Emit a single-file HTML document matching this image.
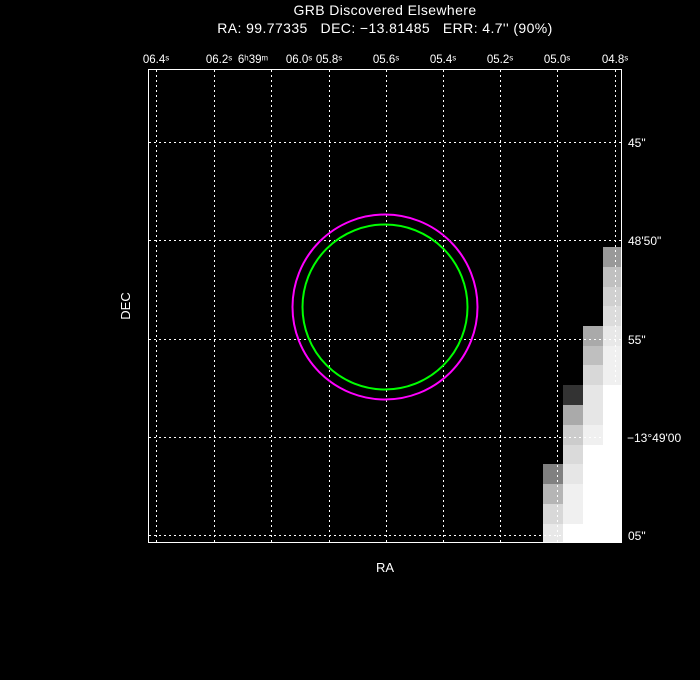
<!DOCTYPE html>
<html><head><style>html,body{margin:0;padding:0;background:#000;width:700px;height:680px;overflow:hidden}text{white-space:pre}</style></head>
<body>
<svg width="700" height="680" xmlns="http://www.w3.org/2000/svg" font-family="Liberation Sans, DejaVu Sans, sans-serif" fill="#fff">
<rect width="700" height="680" fill="#000"/>
<text x="385" y="15" font-size="14" text-anchor="middle" letter-spacing="0.4">GRB Discovered Elsewhere</text>
<text x="385" y="33" font-size="14" text-anchor="middle" letter-spacing="0.4">RA: 99.77335   DEC: −13.81485   ERR: 4.7'' (90%)</text>
<g font-size="11.5" text-anchor="middle">
<text x="156" y="63">06.4ˢ</text>
<text x="219" y="63">06.2ˢ</text>
<text x="253" y="63">6ʰ39ᵐ</text>
<text x="299" y="63">06.0ˢ</text>
<text x="329" y="63">05.8ˢ</text>
<text x="386" y="63">05.6ˢ</text>
<text x="443" y="63">05.4ˢ</text>
<text x="500" y="63">05.2ˢ</text>
<text x="557" y="63">05.0ˢ</text>
<text x="615" y="63">04.8ˢ</text>
</g>
<g>
<rect x="603" y="247" width="19" height="20" fill="#999"/>
<rect x="603" y="267" width="19" height="20" fill="#c0c0c0"/>
<rect x="603" y="287" width="19" height="19" fill="#d0d0d0"/>
<rect x="603" y="306" width="19" height="20" fill="#dcdcdc"/>
<rect x="603" y="326" width="19" height="20" fill="#e8e8e8"/>
<rect x="603" y="346" width="19" height="39" fill="#f0f0f0"/>
<rect x="603" y="385" width="19" height="158" fill="#fff"/>
<rect x="583" y="326" width="20" height="20" fill="#aaa"/>
<rect x="583" y="346" width="20" height="19" fill="#bfbfbf"/>
<rect x="583" y="365" width="20" height="20" fill="#d8d8d8"/>
<rect x="583" y="385" width="20" height="40" fill="#e6e6e6"/>
<rect x="583" y="425" width="20" height="20" fill="#f0f0f0"/>
<rect x="583" y="445" width="20" height="98" fill="#fff"/>
<rect x="563" y="385" width="20" height="20" fill="#333"/>
<rect x="563" y="405" width="20" height="20" fill="#aaa"/>
<rect x="563" y="425" width="20" height="20" fill="#ccc"/>
<rect x="563" y="445" width="20" height="19" fill="#dadada"/>
<rect x="563" y="464" width="20" height="20" fill="#e6e6e6"/>
<rect x="563" y="484" width="20" height="40" fill="#f0f0f0"/>
<rect x="563" y="524" width="20" height="19" fill="#fff"/>
<rect x="543" y="464" width="20" height="20" fill="#808080"/>
<rect x="543" y="484" width="20" height="20" fill="#b5b5b5"/>
<rect x="543" y="504" width="20" height="20" fill="#d8d8d8"/>
<rect x="543" y="524" width="20" height="19" fill="#e8e8e8"/>
</g>
<g stroke="#fff" stroke-width="1" stroke-dasharray="2,3" fill="none">
<path d="M156.5 70V543M214.5 70V543M271.5 70V543M329.5 70V543M386.5 70V543M443.5 70V543M500.5 70V543M557.5 70V543M615.5 70V543"/>
<path d="M149 142.5H622M149 240.5H622M149 339.5H622M149 437.5H622M149 535.5H622"/>
</g>
<rect x="148.5" y="69.5" width="473" height="473" fill="none" stroke="#fff" stroke-width="1"/>
<circle cx="385" cy="307" r="92.5" fill="none" stroke="#f0f" stroke-width="2"/>
<circle cx="385" cy="307" r="82.5" fill="none" stroke="#0f0" stroke-width="2"/>
<g font-size="12">
<text x="628" y="147">45"</text>
<text x="628" y="245">48'50"</text>
<text x="628" y="344">55"</text>
<text x="627" y="442">−13°49'00</text>
<text x="628" y="540">05"</text>
</g>
<text x="385" y="572" font-size="13" text-anchor="middle">RA</text>
<text transform="translate(130,306) rotate(-90)" font-size="13" text-anchor="middle">DEC</text>
</svg>
</body></html>
